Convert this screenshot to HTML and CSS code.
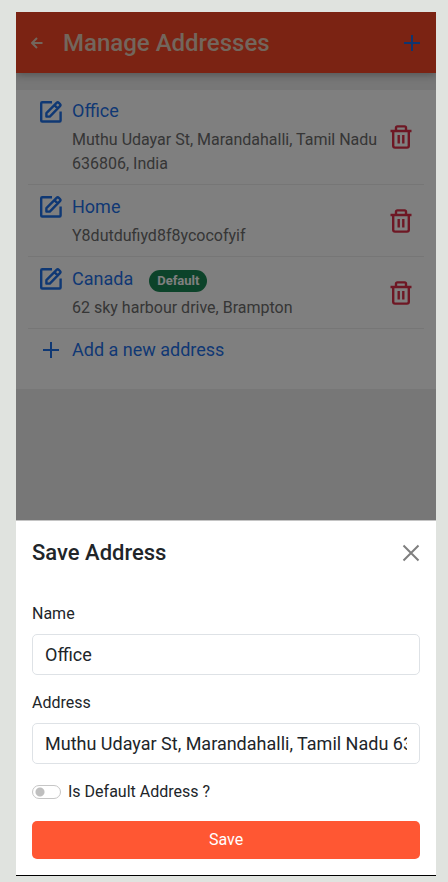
FILE: index.html
```html
<!DOCTYPE html>
<html lang="en">
<head>
<meta charset="utf-8">
<meta name="viewport" content="width=device-width, initial-scale=1">
<title>Manage Addresses</title>
<link rel="stylesheet" href="styles.css">
</head>
<body>
<svg class="symbols" aria-hidden="true">
  <symbol id="edit" viewBox="0 0 22 23">
    <path d="M12 2.2H2.2Q1.2 2.2 1.2 3.2V20.5Q1.2 21.5 2.2 21.5H19.6Q20.6 21.5 20.6 20.5V11.5"/>
    <path d="M6.4 16.6V13.2L16.6 2.8Q17.7 1.7 18.8 2.8L20 4Q21 5.1 20 6.2L9.8 16.6Z M14.4 5.2L17.6 8.4"/>
  </symbol>
  <symbol id="trash" viewBox="0 0 22 24">
    <path d="M0.5 6H21.5 M6 6V2.8Q6 1.4 7.4 1.4H14.6Q16 1.4 16 2.8V6 M3.2 6V20.8Q3.2 22.6 5 22.6H17Q18.8 22.6 18.8 20.8V6 M8.7 10V18.5 M13.3 10V18.5"/>
  </symbol>
  <symbol id="plus" viewBox="0 0 18 18">
    <path d="M9 1V17M1 9H17"/>
  </symbol>
</svg>
<div class="phone">
  <main class="page">
    <header class="bar">
      <button class="icon-button" type="button" aria-label="Back">
        <svg class="icon-back" viewBox="0 0 12 12"><path d="M11.5 6H1M6 1L1 6L6 11"/></svg>
      </button>
      <h1 class="bar-title">Manage Addresses</h1>
      <button class="icon-button" type="button" aria-label="Add address"><svg class="icon-plus"><use href="#plus"/></svg></button>
    </header>
    <ul class="list">
      <li class="item">
        <svg class="icon-edit"><use href="#edit"/></svg>
        <div class="item-text">
          <a class="item-title" href="#">Office</a>
          <p class="item-desc">Muthu Udayar St, Marandahalli, Tamil Nadu 636806, India</p>
        </div>
        <button class="icon-button" type="button" aria-label="Delete Office"><svg class="icon-trash"><use href="#trash"/></svg></button>
      </li>
      <li class="item">
        <svg class="icon-edit"><use href="#edit"/></svg>
        <div class="item-text">
          <a class="item-title" href="#">Home</a>
          <p class="item-desc">Y8dutdufiyd8f8ycocofyif</p>
        </div>
        <button class="icon-button" type="button" aria-label="Delete Home"><svg class="icon-trash"><use href="#trash"/></svg></button>
      </li>
      <li class="item">
        <svg class="icon-edit"><use href="#edit"/></svg>
        <div class="item-text">
          <a class="item-title" href="#">Canada <span class="badge">Default</span></a>
          <p class="item-desc">62 sky harbour drive, Brampton</p>
        </div>
        <button class="icon-button" type="button" aria-label="Delete Canada"><svg class="icon-trash"><use href="#trash"/></svg></button>
      </li>
      <li class="item item-add">
        <span class="icon-slot"><svg class="icon-plus"><use href="#plus"/></svg></span>
        <div class="item-text"><a class="item-title" href="#">Add a new address</a></div>
      </li>
    </ul>
    <div class="backdrop"></div>
  </main>
  <form class="sheet">
    <div class="sheet-head">
      <h2 class="sheet-title">Save Address</h2>
      <button class="icon-button" type="button" aria-label="Close">
        <svg class="icon-close" viewBox="0 0 18 18"><path d="M1.5 1.5L16.5 16.5M16.5 1.5L1.5 16.5"/></svg>
      </button>
    </div>
    <label class="label" for="name">Name</label>
    <input class="field" id="name" type="text" value="Office">
    <label class="label" for="address">Address</label>
    <input class="field" id="address" type="text" value="Muthu Udayar St, Marandahalli, Tamil Nadu 636806, India">
    <div class="check">
      <input class="switch" id="default" type="checkbox">
      <label for="default">Is Default Address ?</label>
    </div>
    <button class="save" type="submit">Save</button>
  </form>
</div>
</body>
</html>
```

FILE: styles.css
```css
* {
  box-sizing: border-box;
}

body {
  margin: 0;
  padding: 12px 12px 6px 16px;
  min-height: 100vh;
  display: flex;
  background: #e0e3df;
  color: #212529;
  font-family: Roboto, "Liberation Sans", sans-serif;
  font-size: 16px;
  line-height: 24px;
}

h1, h2, p, ul {
  margin: 0;
  padding: 0;
}

svg {
  display: block;
  fill: none;
  stroke: currentColor;
  stroke-width: 2;
  stroke-linejoin: round;
}

.symbols {
  position: absolute;
  width: 0;
  height: 0;
}

.phone {
  flex: 1;
  min-width: 0;
  display: flex;
  flex-direction: column;
  background: #fff;
  border-bottom: 1px solid #000;
}

.page {
  position: relative;
  flex: 1;
  overflow: hidden;
  background: #eee;
}

.backdrop {
  position: absolute;
  inset: 0;
  background: rgba(0, 0, 0, 0.5);
}

.icon-button {
  display: flex;
  flex: none;
  padding: 0;
  border: 0;
  background: none;
  color: inherit;
}

.bar {
  display: flex;
  align-items: center;
  gap: 20px;
  height: 61px;
  padding: 0 15px;
  background: #f64626;
  color: #e6ccb8;
  box-shadow: 0 2px 8px rgba(0, 0, 0, 0.3);
}

.bar-title {
  flex: 1;
  font-size: 24px;
  font-weight: 500;
  line-height: 32px;
}

.bar .icon-plus {
  color: #1e6ae0;
}

.icon-back {
  width: 12px;
  height: 12px;
}

.icon-plus {
  width: 18px;
  height: 18px;
}

.list {
  margin-top: 17px;
  padding: 0 12px;
  background: #fff;
  list-style: none;
}

.item {
  display: flex;
  align-items: center;
  min-height: 72px;
  padding: 8px 12px;
  border-bottom: 1px solid #ededed;
}

.item-add {
  min-height: 0;
  padding-bottom: 26px;
  border-bottom: 0;
}

.icon-edit,
.icon-trash {
  stroke-width: 2.4;
}

.icon-edit {
  flex: none;
  align-self: flex-start;
  width: 22px;
  height: 23px;
  margin-top: 2px;
  color: #1f71e8;
}

.icon-slot {
  display: flex;
  justify-content: center;
  width: 22px;
  color: #1f71e8;
}

.item-text {
  flex: 1;
  min-width: 0;
  padding: 0 8px 0 10px;
}

.item-title {
  display: flex;
  align-items: center;
  gap: 16px;
  color: #1f71e8;
  font-size: 18px;
  line-height: 26px;
  text-decoration: none;
}

.item-desc {
  margin-top: 4px;
  color: #6c6c6c;
}

.badge {
  margin-top: 4px;
  padding: 0 8px;
  border-radius: 11px;
  background: #198754;
  color: #fff;
  font-size: 13px;
  font-weight: 700;
  line-height: 22px;
}

.icon-trash {
  width: 22px;
  height: 24px;
  color: #dc2f48;
}

.sheet {
  padding: 16px;
  border-top: 1px solid #c4c4c4;
}

.sheet-head {
  display: flex;
  align-items: center;
  justify-content: space-between;
  margin-bottom: 33px;
}

.sheet-title {
  font-size: 22px;
  font-weight: 500;
  line-height: 32px;
}

.icon-close {
  width: 18px;
  height: 18px;
  color: #7f7f7f;
}

.label {
  display: block;
  margin-bottom: 8px;
}

.field {
  display: block;
  width: 100%;
  height: 41px;
  margin-bottom: 16px;
  padding: 0 12px;
  border: 1px solid #dee2e6;
  border-radius: 5px;
  background: #fff;
  color: inherit;
  font: inherit;
  font-size: 18px;
}

.check {
  display: flex;
  align-items: center;
  gap: 7px;
  margin-bottom: 17px;
}

.switch {
  appearance: none;
  width: 29px;
  height: 14px;
  margin: 0;
  border: 1px solid #c6c6c6;
  border-radius: 7px;
  background: radial-gradient(circle at 7px 6px, #bfbfbf 4px, transparent 5px);
}

.save {
  display: block;
  width: 100%;
  height: 38px;
  padding: 0;
  border: 0;
  border-radius: 5px;
  background: #ff5733;
  color: #fff;
  font: inherit;
}
```
